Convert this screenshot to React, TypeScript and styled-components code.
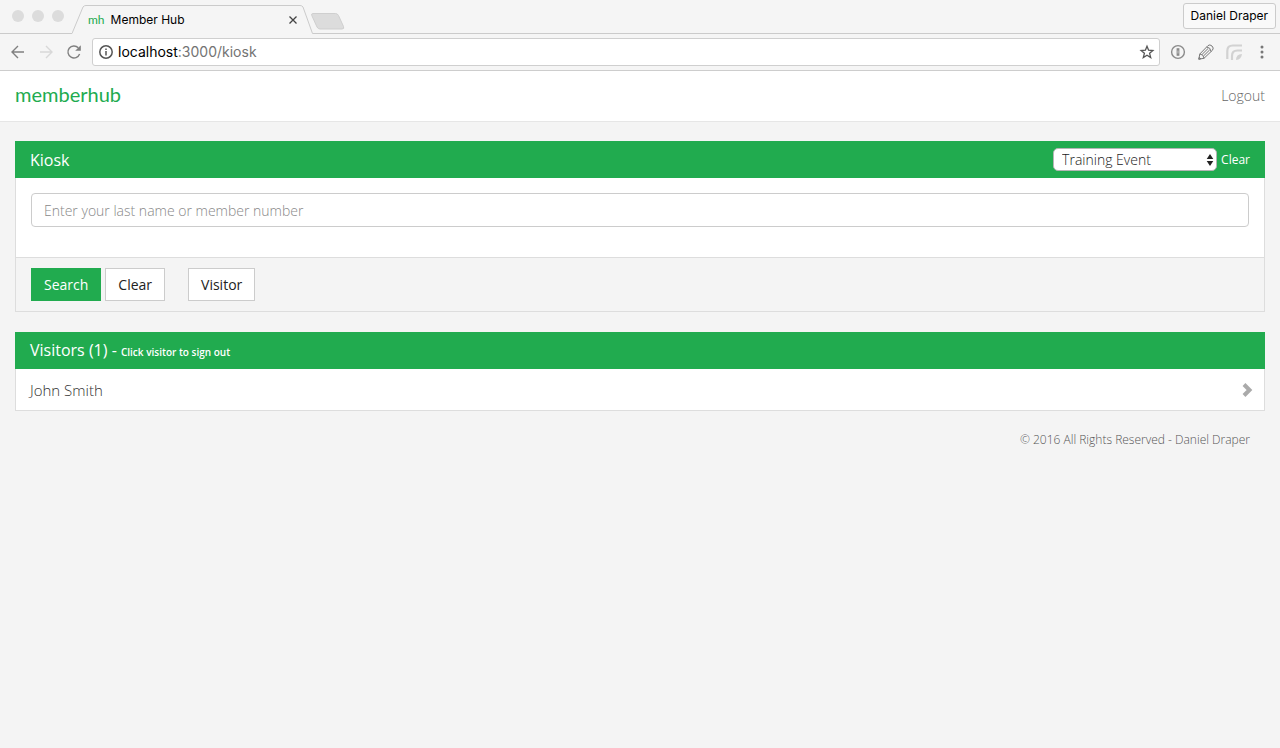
import React, { useState } from "react";
import styled, { createGlobalStyle } from "styled-components";

const green = "#21ab4f";
const line = "#dddddd";

const GlobalStyle = createGlobalStyle`
  *, *::before, *::after { box-sizing: border-box; }
  body {
    margin: 0;
    background: #f4f4f4;
    color: #444;
    font: 300 15px/20px "Open Sans", sans-serif;
  }
  button, input, select { font: inherit; }
`;

/* Browser window */

const Browser = styled.header`
  font-family: Inter, "Liberation Sans", sans-serif;
  font-weight: 400;
  background: #f5f5f5;
  border-bottom: 1px solid #cdcdcd;
`;

const TabStrip = styled.div`
  display: flex;
  height: 34px;
`;

const StripEdge = styled.div<{ $grow?: boolean }>`
  display: flex;
  align-items: flex-start;
  flex: ${(p) => (p.$grow ? "1" : "none")};
  justify-content: ${(p) => (p.$grow ? "space-between" : "flex-start")};
  border-bottom: 1px solid #cbcbcb;
`;

const Lights = styled.div`
  display: flex;
  gap: 8px;
  padding: 10px 8px 0 12px;
`;

const Light = styled.span`
  width: 12px;
  height: 12px;
  border-radius: 50%;
  background: #dcdcdc;
`;

const Slope = styled.svg`
  display: block;
  flex: none;
  width: 14px;
  height: 34px;
`;

const Tab = styled.div`
  display: flex;
  align-items: center;
  gap: 6px;
  width: 214px;
  height: 34px;
  margin-top: 5px;
  padding: 0 2px 5px 2px;
  border-top: 1px solid #cbcbcb;
  color: #000;
  font-size: 12px;
  line-height: 16px;
`;

const Favicon = styled.span`
  color: ${green};
  font-family: Lato, sans-serif;
  font-size: 12px;
`;

const TabTitle = styled.span`
  flex: 1;
`;

const IconButton = styled.button`
  display: flex;
  padding: 0;
  border: 0;
  background: none;
  color: #808080;
  &:disabled { color: #d8d8d8; }
`;

const NewTab = styled(IconButton)`
  margin-left: -3px;
  padding: 13px 0 0;
`;

const Profile = styled.button`
  height: 26px;
  margin: 3px 4px 0 0;
  padding: 0 7px;
  border: 1px solid #cbcbcb;
  border-radius: 3px;
  background: #f9f9f9;
  color: #000;
  font-size: 12px;
`;

const Toolbar = styled.div`
  display: flex;
  align-items: center;
  height: 36px;
  padding: 0 10px;
`;

const Navigation = styled.div`
  display: flex;
  gap: 12px;
  padding-right: 10px;
`;

const AddressBar = styled.div`
  display: flex;
  align-items: center;
  flex: 1;
  gap: 4px;
  height: 28px;
  padding: 0 4px 0 5px;
  border: 1px solid #cfcfcf;
  border-radius: 3px;
  background: #fff;
`;

const Address = styled.div`
  flex: 1;
  color: #737373;
  font-size: 14px;
`;

const Host = styled.span`
  color: #000;
`;

const Extensions = styled.div`
  display: flex;
  gap: 12px;
  padding-left: 10px;
`;

/* Site */

const SiteHeader = styled.div`
  display: flex;
  align-items: center;
  justify-content: space-between;
  height: 51px;
  padding: 0 15px;
  border-bottom: 1px solid #e6e6e6;
  background: #fff;
`;

const Logo = styled.a`
  padding-bottom: 4px;
  color: ${green};
  font: 400 20px/24px Lato, sans-serif;
  text-decoration: none;
`;

const TextLink = styled.a<{ $light?: boolean }>`
  color: ${(p) => (p.$light ? "#fff" : "#666")};
  font-size: ${(p) => (p.$light ? 12 : 14)}px;
  font-weight: ${(p) => (p.$light ? 400 : 300)};
  text-decoration: none;
`;

const Main = styled.main`
  display: grid;
  gap: 20px;
  padding: 19px 15px 0;
`;

const Panel = styled.section`
  border: 1px solid ${line};
  border-top: 0;
  background: #fff;
`;

const PanelHeading = styled.div`
  display: flex;
  align-items: center;
  justify-content: space-between;
  height: 37px;
  margin: 0 -1px;
  padding: 0 15px;
  background: ${green};
  color: #fff;
`;

const PanelTitle = styled.h2`
  margin: 0;
  font-size: 16px;
  font-weight: 400;
`;

const Hint = styled.small`
  font-size: 10px;
  font-weight: 600;
`;

const EventPicker = styled.div`
  display: flex;
  align-items: center;
  gap: 4px;
`;

const SelectBox = styled.div`
  display: grid;
  align-items: center;
  width: 164px;
  & > * { grid-area: 1 / 1; }
  & > svg { justify-self: end; margin-right: 3px; pointer-events: none; }
`;

const Select = styled.select`
  appearance: none;
  width: 100%;
  height: 23px;
  padding: 0 16px 0 8px;
  border: 1px solid #b5b5b5;
  border-radius: 5px;
  background: #fff;
  color: #222;
  font-size: 14px;
  font-weight: 300;
`;

const PanelBody = styled.div`
  padding: 15px 15px 30px;
`;

const SearchInput = styled.input`
  display: block;
  width: 100%;
  height: 34px;
  padding: 0 12px;
  border: 1px solid #ccc;
  border-radius: 4px;
  background: #fff;
  color: #555;
  font-size: 14px;
  &::placeholder { color: #888; opacity: 1; }
`;

const PanelFooter = styled.div`
  display: flex;
  align-items: center;
  gap: 4px;
  height: 54px;
  padding: 0 15px;
  border-top: 1px solid ${line};
  background: #f4f4f4;
`;

const Button = styled.button<{ $primary?: boolean; $apart?: boolean }>`
  height: 33px;
  margin-left: ${(p) => (p.$apart ? 19 : 0)}px;
  padding: 0 12px;
  border: 1px solid ${(p) => (p.$primary ? green : "#ccc")};
  background: ${(p) => (p.$primary ? green : "#fff")};
  color: ${(p) => (p.$primary ? "#fff" : "#222")};
  font-size: 14px;
  font-weight: 400;
`;

const VisitorList = styled.ul`
  margin: 0;
  padding: 0;
  list-style: none;
`;

const VisitorRow = styled.button`
  display: flex;
  align-items: center;
  justify-content: space-between;
  width: 100%;
  height: 41px;
  padding: 0 11px 0 14px;
  border: 0;
  background: none;
  color: #333;
  text-align: left;
`;

const Footer = styled.footer`
  padding: 19px 30px;
  color: #555;
  font-size: 12px;
  text-align: right;
`;

const visitors = ["John Smith"];

export default function App() {
  const [query, setQuery] = useState("");
  return (
    <>
      <GlobalStyle />
      <Browser>
        <TabStrip>
          <StripEdge>
            <Lights><Light /><Light /><Light /></Lights>
          </StripEdge>
          <Slope viewBox="0 0 14 34" fill="none" stroke="#cbcbcb">
            <path d="M0 33.5 L11 7 Q12 5.5 14 5.5" />
          </Slope>
          <Tab>
            <Favicon>mh</Favicon>
            <TabTitle>Member Hub</TabTitle>
            <IconButton aria-label="Close tab">
              <svg width="10" height="10" viewBox="0 0 10 10" stroke="#444" strokeWidth="1.3"><path d="M1.5 1.5l7 7M8.5 1.5l-7 7" /></svg>
            </IconButton>
          </Tab>
          <Slope viewBox="0 0 14 34" fill="none" stroke="#cbcbcb">
            <path d="M0 5.5 Q2 5.5 3 7 L12.500 33.5 H14" />
          </Slope>
          <StripEdge $grow>
            <NewTab aria-label="New tab">
              <svg width="34" height="17" viewBox="0 0 34 17"><path d="M2 .5h22.5q2 0 3 2l5 11q1 2.500-1.500 2.500H9q-2 0-3-2L.8 2.500Q0 .5 2 .5z" fill="#dcdcdc" stroke="#cfcfcf" /></svg>
            </NewTab>
            <Profile>Daniel Draper</Profile>
          </StripEdge>
        </TabStrip>
        <Toolbar>
          <Navigation>
            <IconButton aria-label="Back">
              <svg width="16" height="16" viewBox="0 0 16 16" fill="none" stroke="currentColor" strokeWidth="1.400"><path d="M14 8H2.500M8 2L2 8l6 6" /></svg>
            </IconButton>
            <IconButton aria-label="Forward" disabled>
              <svg width="16" height="16" viewBox="0 0 16 16" fill="none" stroke="currentColor" strokeWidth="1.400"><path d="M2 8h11.500M8 2l6 6-6 6" /></svg>
            </IconButton>
            <IconButton aria-label="Reload">
              <svg width="16" height="16" viewBox="0 0 16 16" fill="none" stroke="currentColor" strokeWidth="1.400"><path d="M13.600 10A6 6 0 1 1 12.300 3.800" /><path d="M14.800 1.200v5.600H9.200z" fill="currentColor" stroke="none" /></svg>
            </IconButton>
          </Navigation>
          <AddressBar>
            <svg width="16" height="16" viewBox="0 0 16 16" fill="none" stroke="#555" strokeWidth="1.500"><circle cx="8" cy="8" r="6.200" /><path d="M8 7v4.500M8 4.500V6" /></svg>
            <Address><Host>localhost</Host>:3000/kiosk</Address>
            <IconButton aria-label="Bookmark">
              <svg width="16" height="16" viewBox="0 0 16 16" fill="none" stroke="#555" strokeWidth="1.300"><path d="M8 2.200l1.600 4 4.300.3-3.300 2.800 1.100 4.300L8 11.300l-3.700 2.300 1.100-4.300-3.300-2.800 4.300-.3z" /></svg>
            </IconButton>
          </AddressBar>
          <Extensions>
            <IconButton aria-label="Password manager">
              <svg width="16" height="16" viewBox="0 0 16 16" fill="none" stroke="#8a8a8a"><circle cx="8" cy="8" r="6.400" strokeWidth="1.400" /><path d="M8 4.200v7.600" strokeWidth="2.800" /><path d="M8 6.500v3" stroke="#ddd" strokeWidth=".8" /></svg>
            </IconButton>
            <IconButton aria-label="Editor">
              <svg width="16" height="16" viewBox="0 0 16 16" fill="none" stroke="#777" strokeWidth="1"><path d="M.8 15.200l1-5.200L10 1.600q1.800-1.600 4 .4t.5 4.200L6 14.300zM1.800 10q4 .2 4.200 4.300M8.700 3q4 .4 4.300 4.500M4.200 10.300l6-5.900M5.700 11.800l6-5.900M.8 15.200l2-.4-1.500-1.500z" /></svg>
            </IconButton>
            <IconButton aria-label="Feed">
              <svg width="16" height="16" viewBox="0 0 16 16" fill="none" stroke="#d2d2d2" strokeWidth="2.200"><path d="M1.300 15V7q0-5.500 5.500-5.500H16M6 16v-4q0-5.500 5.500-5.500H16" /><path d="M10 16q0-6 6-6-.5 5.500-6 6z" fill="#d2d2d2" stroke="none" /></svg>
            </IconButton>
            <IconButton aria-label="Menu">
              <svg width="16" height="16" viewBox="0 0 16 16" fill="#777"><circle cx="8" cy="3" r="1.500" /><circle cx="8" cy="8" r="1.500" /><circle cx="8" cy="13" r="1.500" /></svg>
            </IconButton>
          </Extensions>
        </Toolbar>
      </Browser>
      <SiteHeader>
        <Logo href="#">memberhub</Logo>
        <TextLink href="#">Logout</TextLink>
      </SiteHeader>
      <Main>
        <Panel>
          <PanelHeading>
            <PanelTitle>Kiosk</PanelTitle>
            <EventPicker>
              <SelectBox>
                <Select aria-label="Event"><option>Training Event</option></Select>
                <svg width="8" height="12" viewBox="0 0 8 12" fill="#222"><path d="M4 0l3.300 5H.7zM4 12l3.300-5H.7z" /></svg>
              </SelectBox>
              <TextLink href="#" $light>Clear</TextLink>
            </EventPicker>
          </PanelHeading>
          <PanelBody>
            <SearchInput
              aria-label="Last name or member number"
              placeholder="Enter your last name or member number"
              value={query}
              onChange={(e) => setQuery(e.target.value)}
            />
          </PanelBody>
          <PanelFooter>
            <Button $primary>Search</Button>
            <Button onClick={() => setQuery("")}>Clear</Button>
            <Button $apart>Visitor</Button>
          </PanelFooter>
        </Panel>
        <Panel>
          <PanelHeading>
            <PanelTitle>Visitors ({visitors.length}) - <Hint>Click visitor to sign out</Hint></PanelTitle>
          </PanelHeading>
          <VisitorList>
            {visitors.map((name) => (
              <li key={name}>
                <VisitorRow>
                  {name}
                  <svg width="11" height="14" viewBox="0 0 11 14" fill="none" stroke="#aaa" strokeWidth="4"><path d="M2 1.500L7.500 7 2 12.500" /></svg>
                </VisitorRow>
              </li>
            ))}
          </VisitorList>
        </Panel>
      </Main>
      <Footer>© 2016 All Rights Reserved - Daniel Draper</Footer>
    </>
  );
}
